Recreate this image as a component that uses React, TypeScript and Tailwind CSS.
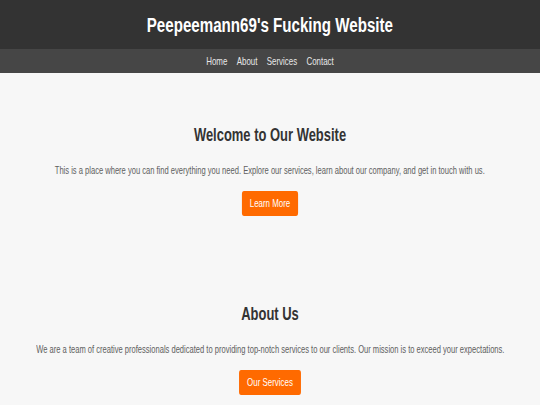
export default function App() {
  const font = { fontFamily: '"Liberation Sans", Arial, Helvetica, sans-serif' };
  return (
    <div className="w-[540px] min-h-[405px] overflow-hidden bg-[#f7f7f7]" style={font}>
      <div className="w-[750px] origin-top-left scale-x-[0.72]">
        <header className="bg-[#333333] h-[49px] flex items-center justify-center">
          <h1 className="text-white text-[20px] font-bold leading-none scale-x-[1.05]">Peepeemann69's Fucking Website</h1>
        </header>
        <nav className="bg-[#464646] h-[24px] flex items-center justify-center gap-[13px] text-[11px] leading-none text-[#e8e8e8]">
          <a>Home</a>
          <a>About</a>
          <a>Services</a>
          <a>Contact</a>
        </nav>
        <section className="flex flex-col items-center pt-[53px]">
          <h2 className="text-[18px] font-bold text-[#333333] leading-none">Welcome to Our Website</h2>
          <p className="mt-[21px] text-[11px] text-[#606060] leading-none whitespace-nowrap scale-x-[0.955]">This is a place where you can find everything you need. Explore our services, learn about our company, and get in touch with us.</p>
          <button className="mt-[15px] bg-[#ff6a00] text-white text-[11px] leading-none rounded-[3px] h-[25px] px-[11px]">Learn More</button>
        </section>
        <section className="flex flex-col items-center pt-[89px]">
          <h2 className="text-[18px] font-bold text-[#333333] leading-none">About Us</h2>
          <p className="mt-[21px] text-[11px] text-[#606060] leading-none whitespace-nowrap scale-x-[0.955]">We are a team of creative professionals dedicated to providing top-notch services to our clients. Our mission is to exceed your expectations.</p>
          <button className="mt-[15px] bg-[#ff6a00] text-white text-[11px] leading-none rounded-[3px] h-[25px] px-[11px]">Our Services</button>
        </section>
      </div>
    </div>
  );
}
